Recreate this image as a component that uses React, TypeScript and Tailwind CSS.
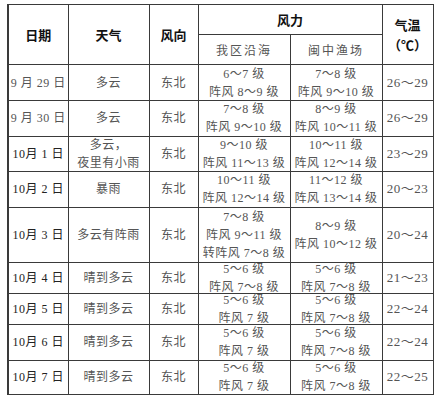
const rows = [
  { date: '9 月 29 日', weather: ['多云'], dir: '东北', local: ['6～7 级', '阵风 8～9 级'], fish: ['7～8 级', '阵风 9～10 级'], temp: '26～29', h: 'h-[35px]' },
  { date: '9 月 30 日', weather: ['多云'], dir: '东北', local: ['7～8 级', '阵风 9～10 级'], fish: ['8～9 级', '阵风 10～11 级'], temp: '26～29', h: 'h-[34.5px]' },
  { date: '10月 1 日', weather: ['多云，', '夜里有小雨'], dir: '东北', local: ['9～10 级', '阵风 11～13 级'], fish: ['10～11 级', '阵风 12～14 级'], temp: '23～29', h: 'h-[34.5px]' },
  { date: '10月 2 日', weather: ['暴雨'], dir: '东北', local: ['10～11 级', '阵风 12～14 级'], fish: ['11～12 级', '阵风 13～14 级'], temp: '20～23', h: 'h-[34.5px]' },
  { date: '10月 3 日', weather: ['多云有阵雨'], dir: '东北', local: ['7～8 级', '阵风 9～11 级', '转阵风 7～8 级'], fish: ['8～9 级', '阵风 10～12 级'], temp: '20～24', h: 'h-[54.5px]' },
  { date: '10月 4 日', weather: ['晴到多云'], dir: '东北', local: ['5～6 级', '阵风 7～8 级'], fish: ['5～6 级', '阵风 7～8 级'], temp: '21～23', h: 'h-[29.5px]' },
  { date: '10月 5 日', weather: ['晴到多云'], dir: '东北', local: ['5～6 级', '阵风 7 级'], fish: ['5～6 级', '阵风 7～8 级'], temp: '22～24', h: 'h-[30.5px]' },
  { date: '10月 6 日', weather: ['晴到多云'], dir: '东北', local: ['5～6 级', '阵风 7 级'], fish: ['5～6 级', '阵风 7～8 级'], temp: '22～24', h: 'h-[34.5px]' },
  { date: '10月 7 日', weather: ['晴到多云'], dir: '东北', local: ['5～6 级', '阵风 7 级'], fish: ['5～6 级', '阵风 7～8 级'], temp: '22～25', h: 'h-[33.5px]' },
]

const cell = 'border-[1.5px] border-[#3a3a3a] p-0 text-center align-middle'

function Lines({ items, h }: { items: string[]; h: string }) {
  return (
    <div className={`flex flex-col items-center justify-center leading-[18px] tracking-[0.5px] ${h}`}>
      {items.map((t) => (
        <span key={t} className="whitespace-nowrap">{t}</span>
      ))}
    </div>
  )
}

export default function App() {
  return (
    <div className="min-h-[401px] w-[438px] bg-white pl-[7px] pt-[4px] font-['Liberation_Serif','Noto_Sans_CJK_SC',serif] text-[12px] text-[#555]">
      <table className="w-[425px] table-fixed border-collapse">
        <colgroup>
          <col className="w-[60px]" />
          <col className="w-[81px]" />
          <col className="w-[49px]" />
          <col className="w-[92px]" />
          <col className="w-[92px]" />
          <col className="w-[51px]" />
        </colgroup>
        <thead className="font-['Noto_Sans_CJK_SC',sans-serif] text-[13px] font-bold text-[#111]">
          <tr className="h-[30px]">
            <th rowSpan={2} className={`${cell} border-l-2`}>日期</th>
            <th rowSpan={2} className={cell}>天气</th>
            <th rowSpan={2} className={cell}>风向</th>
            <th colSpan={2} className={cell}>风力</th>
            <th rowSpan={2} className={`${cell} leading-[20px]`}>
              气温
              <br />
              （℃）
            </th>
          </tr>
          <tr className="h-[30px]">
            <th className={`${cell} font-['Noto_Sans_CJK_SC',sans-serif] text-[12px] font-normal tracking-[2px] text-[#555]`}>我区沿海</th>
            <th className={`${cell} font-['Noto_Sans_CJK_SC',sans-serif] text-[12px] font-normal tracking-[2px] text-[#555]`}>闽中渔场</th>
          </tr>
        </thead>
        <tbody>
          {rows.map((r) => (
            <tr key={r.date}>
              <td className={`${cell} border-l-2 tracking-[0.5px] ${r.date.startsWith('10') ? 'text-[#222]' : ''}`}>
                <Lines items={[r.date]} h={r.h} />
              </td>
              <td className={cell}><Lines items={r.weather} h={r.h} /></td>
              <td className={`${cell} tracking-[2px]`}><Lines items={[r.dir]} h={r.h} /></td>
              <td className={cell}><Lines items={r.local} h={r.h} /></td>
              <td className={cell}><Lines items={r.fish} h={r.h} /></td>
              <td className={`${cell} text-[13px]`}><Lines items={[r.temp]} h={r.h} /></td>
            </tr>
          ))}
        </tbody>
      </table>
    </div>
  )
}
